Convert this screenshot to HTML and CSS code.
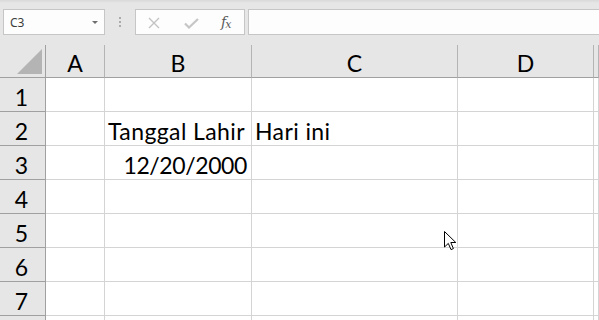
FILE: index.html
```html
<!DOCTYPE html>
<html>
<head>
<meta charset="utf-8">
<link rel="stylesheet" href="styles.css">
</head>
<body>
<div class="app">
  <div class="formula-bar">
    <div class="name-box">
      <span class="name-text">C3</span>
      <span class="dd-arrow"></span>
    </div>
    <div class="grip">
      <span class="dot"></span><span class="dot"></span><span class="dot"></span>
    </div>
    <div class="fx-buttons">
      <svg class="icon-x" width="12" height="12" viewBox="0 0 12 12"><path d="M1 1 L11 11 M11 1 L1 11" stroke="#c3c3c3" stroke-width="1.4" fill="none"/></svg>
      <svg class="icon-check" width="15" height="11" viewBox="0 0 15 11"><path d="M1 5.5 L5 9.5 L14 1" stroke="#c6c6c6" stroke-width="2.2" fill="none"/></svg>
      <span class="fx"><i>f</i><i class="fx-x">x</i></span>
    </div>
    <div class="formula-input"></div>
  </div>

  <div class="sheet">
    <div class="corner"><span class="tri"></span></div>
    <div class="col-h">A</div>
    <div class="col-h">B</div>
    <div class="col-h">C</div>
    <div class="col-h">D</div>
    <div class="col-h"></div>

    <div class="row-h">1</div>
    <div class="cell"></div><div class="cell"></div><div class="cell"></div><div class="cell"></div><div class="cell"></div>

    <div class="row-h">2</div>
    <div class="cell"></div><div class="cell text">Tanggal Lahir</div><div class="cell text">Hari ini</div><div class="cell"></div><div class="cell"></div>

    <div class="row-h">3</div>
    <div class="cell"></div><div class="cell num">12/20/2000</div><div class="cell"></div><div class="cell"></div><div class="cell"></div>

    <div class="row-h">4</div>
    <div class="cell"></div><div class="cell"></div><div class="cell"></div><div class="cell"></div><div class="cell"></div>

    <div class="row-h">5</div>
    <div class="cell"></div><div class="cell"></div><div class="cell"></div><div class="cell"></div><div class="cell"></div>

    <div class="row-h">6</div>
    <div class="cell"></div><div class="cell"></div><div class="cell"></div><div class="cell"></div><div class="cell"></div>

    <div class="row-h">7</div>
    <div class="cell"></div><div class="cell"></div><div class="cell"></div><div class="cell"></div><div class="cell"></div>

    <div class="row-h"></div>
    <div class="cell"></div><div class="cell"></div><div class="cell"></div><div class="cell"></div><div class="cell"></div>
  </div>

  <svg class="cursor" width="13" height="21" viewBox="0 0 13 21">
    <path d="M0.5 0.5 L0.5 16 L4.3 12.4 L7 18.6 L9.4 17.6 L6.8 11.5 L11.8 11.5 Z" fill="#fff" stroke="#000" stroke-width="1" stroke-linejoin="miter"/>
  </svg>
</div>
</body>
</html>
```

FILE: styles.css
```css
* { box-sizing: border-box; }

html, body {
  margin: 0;
  padding: 0;
  width: 599px;
  height: 320px;
  overflow: hidden;
  background: #e6e6e6;
}

.app {
  position: relative;
  width: 599px;
  height: 320px;
  overflow: hidden;
}

.formula-bar {
  height: 45px;
  display: flex;
  align-items: flex-start;
  padding-top: 9px;
  background: linear-gradient(#d9d9d9 0px, #e6e6e6 3px, #e6e6e6 100%);
}

.name-box {
  margin-left: 3px;
  width: 102px;
  height: 26px;
  border: 1px solid #c6c6c6;
  background: #fdfdfd;
  display: flex;
  align-items: center;
  justify-content: space-between;
  padding: 0 6px 0 6px;
}

.name-text {
  font-family: "Noto Sans", sans-serif;
  font-size: 12px;
  color: #3c3c3c;
}

.dd-arrow {
  width: 0;
  height: 0;
  border-left: 3.5px solid transparent;
  border-right: 3.5px solid transparent;
  border-top: 3.5px solid #6f6f6f;
  margin-top: 1px;
}

.grip {
  width: 30px;
  height: 26px;
  display: flex;
  flex-direction: column;
  align-items: center;
  justify-content: center;
  gap: 2px;
}

.dot {
  width: 2px;
  height: 2px;
  background: #ababab;
}

.fx-buttons {
  width: 110px;
  height: 26px;
  border: 1px solid #c6c6c6;
  background: #fdfdfd;
  display: flex;
  align-items: center;
  padding-left: 12px;
}

.icon-x { margin-top: 1px; }
.icon-check { margin-left: 24px; margin-top: 2px; }

.fx {
  margin-left: 22px;
  font-family: "DejaVu Serif", "Liberation Serif", serif;
  font-size: 14px;
  color: #5a5a5a;
  letter-spacing: -1px;
}

.fx-x {
  font-size: 11px;
  position: relative;
  top: 1px;
}

.formula-input {
  margin-left: 3px;
  flex: 1;
  height: 26px;
  border: 1px solid #c6c6c6;
  border-right: none;
  background: #fdfdfd;
}

.sheet {
  display: grid;
  grid-template-columns: 46px 59px 147px 206px 136px 1fr;
  grid-template-rows: 33px repeat(7, 34px) 34px;
  font-family: "Lato", "Open Sans", sans-serif;
  font-size: 23px;
  color: #000;
}

.corner {
  background: #e6e6e6;
  border-right: 1px solid #a0a0a0;
  border-bottom: 1px solid #a0a0a0;
  position: relative;
}

.tri {
  position: absolute;
  left: 17px;
  top: 4px;
  width: 0;
  height: 0;
  border-left: 25px solid transparent;
  border-bottom: 25px solid #b4b4b4;
}

.col-h {
  background: #e6e6e6;
  border-right: 1px solid #b4b4b4;
  border-bottom: 1px solid #a0a0a0;
  display: flex;
  align-items: flex-end;
  justify-content: center;
  padding-bottom: 2px;
  line-height: 1;
}

.row-h {
  background: #e6e6e6;
  border-right: 1px solid #a0a0a0;
  border-bottom: 1px solid #a0a0a0;
  display: flex;
  align-items: flex-end;
  justify-content: center;
  padding-bottom: 2px;
  padding-right: 2px;
  line-height: 1;
}

.cell {
  background: #fff;
  border-right: 1px solid #d4d4d4;
  border-bottom: 1px solid #d4d4d4;
  display: flex;
  align-items: flex-end;
  padding-bottom: 2px;
  line-height: 1;
  white-space: nowrap;
}

.cell.text {
  padding-left: 3px;
  letter-spacing: 0.4px;
}

.cell.num {
  justify-content: flex-end;
  padding-right: 4px;
  letter-spacing: -0.4px;
}

.cursor {
  position: absolute;
  left: 444px;
  top: 231px;
}
```
